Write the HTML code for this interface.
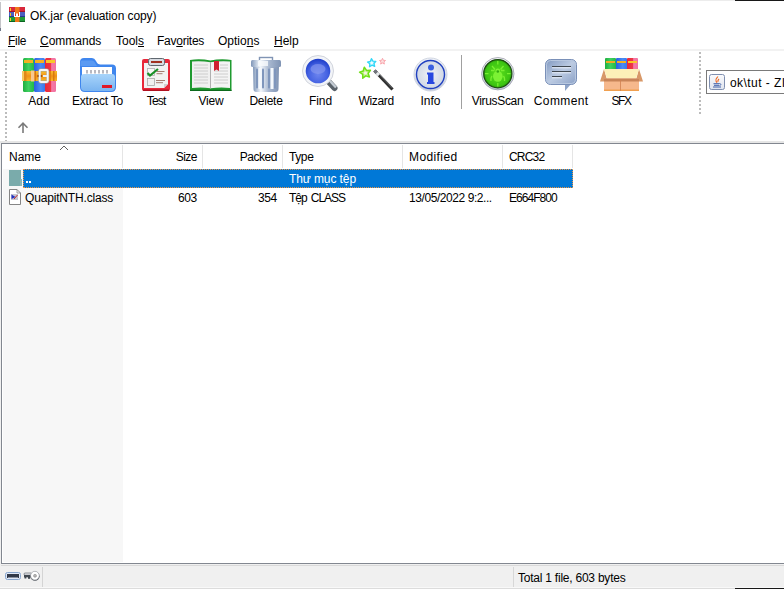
<!DOCTYPE html>
<html>
<head>
<meta charset="utf-8">
<style>
html,body{margin:0;padding:0;}
body{width:784px;height:589px;position:relative;overflow:hidden;background:#fff;font-family:"Liberation Sans",sans-serif;font-size:12px;color:#000;}
.abs{position:absolute;}
.t{position:absolute;white-space:nowrap;line-height:14px;}
u{text-decoration:underline;text-underline-offset:1px;}
.tb{position:absolute;top:100px;transform:translateX(-50%);white-space:nowrap;line-height:14px;top:94px;}
.ic{position:absolute;top:56px;}
</style>
</head>
<body>
<!-- left window edge -->
<div class="abs" style="left:0;top:2px;width:1px;height:26px;background:#c4c4c8;"></div>
<div class="abs" style="left:0;top:28px;width:1px;height:3px;background:#707888;"></div>
<div class="abs" style="left:0;top:0;width:784px;height:1px;background:#ececec;"></div>
<div class="abs" style="left:735px;top:0;width:49px;height:1px;background:#181818;"></div>

<!-- title -->
<svg class="abs" style="left:9px;top:7px" width="16" height="15" viewBox="0 0 16 15">
<rect x="0" y="0" width="16" height="5" fill="#d8283c"/><rect x="0" y="4" width="16" height="1" fill="#a01428"/>
<rect x="0" y="5" width="16" height="5" fill="#4a60c0"/><rect x="0" y="9" width="16" height="1" fill="#283890"/>
<rect x="0" y="10" width="16" height="5" fill="#1f9a38"/><rect x="0" y="14" width="16" height="1" fill="#0c6420"/>
<rect x="1" y="1" width="1" height="3" fill="#f6d020"/><rect x="1" y="6" width="1" height="3" fill="#f6c020"/><rect x="1" y="11" width="1" height="3" fill="#f6d020"/>
<rect x="6" y="0" width="4.500" height="15" fill="#f07818"/>
<rect x="5" y="5" width="6" height="5" fill="#fff"/>
<rect x="6" y="6" width="1" height="3" fill="#e03818"/><rect x="9" y="6" width="1" height="3" fill="#e03818"/><rect x="6" y="5" width="4" height="1.500" fill="#f07818"/>
</svg>
<div class="t" style="left:30px;top:9px;letter-spacing:-0.1px;">OK.jar (evaluation copy)</div>

<!-- menu -->
<div class="t" style="left:8px;top:34px;letter-spacing:-0.3px;"><u>F</u>ile</div>
<div class="t" style="left:40px;top:34px;"><u>C</u>ommands</div>
<div class="t" style="left:116px;top:34px;">Tool<u>s</u></div>
<div class="t" style="left:157px;top:34px;letter-spacing:-0.25px;">Fav<u>o</u>rites</div>
<div class="t" style="left:218px;top:34px;">Optio<u>n</u>s</div>
<div class="t" style="left:274px;top:34px;"><u>H</u>elp</div>

<!-- toolbar -->
<div class="abs" style="left:0;top:49px;width:784px;height:2px;background:#f2f2f2;"></div>
<div class="abs" style="left:5px;top:52px;width:2px;height:90px;background:repeating-linear-gradient(to bottom,#bcbcbc 0,#bcbcbc 2px,transparent 2px,transparent 4px);"></div>
<div class="abs" style="left:0;top:141px;width:784px;height:2px;background:#e6e6e6;"></div>

<div class="tb" style="left:39px;">Add</div>
<div class="tb" style="left:97.500px;letter-spacing:-0.2px;">Extract To</div>
<div class="tb" style="left:156.200px;letter-spacing:-0.75px;">Test</div>
<div class="tb" style="left:211px;letter-spacing:-0.2px;">View</div>
<div class="tb" style="left:266px;letter-spacing:-0.25px;">Delete</div>
<div class="tb" style="left:320.500px;letter-spacing:-0.1px;">Find</div>
<div class="tb" style="left:376.200px;letter-spacing:-0.33px;">Wizard</div>
<div class="tb" style="left:430.500px;">Info</div>
<div class="tb" style="left:497.500px;letter-spacing:-0.33px;">VirusScan</div>
<div class="tb" style="left:561.200px;letter-spacing:0.4px;">Comment</div>
<div class="tb" style="left:621px;letter-spacing:-1.4px;">SFX</div>
<div class="abs" style="left:461px;top:55px;width:1px;height:54px;background:#a0a0a0;"></div>
<div class="abs" style="left:699px;top:52px;width:2px;height:62px;background:repeating-linear-gradient(to bottom,#bcbcbc 0,#bcbcbc 2px,transparent 2px,transparent 4px);"></div>

<!-- ICONS -->
<svg class="abs" style="left:0;top:0" width="784" height="140" viewBox="0 0 784 140">
<defs>
<linearGradient id="gG" x1="0" x2="1"><stop offset="0" stop-color="#1fae3f"/><stop offset="0.5" stop-color="#3fd060"/><stop offset="1" stop-color="#26b848"/></linearGradient>
<linearGradient id="gB" x1="0" x2="1"><stop offset="0" stop-color="#2a5fe0"/><stop offset="0.6" stop-color="#4a8cf5"/><stop offset="1" stop-color="#3a78ec"/></linearGradient>
<linearGradient id="gR" x1="0" x2="1"><stop offset="0" stop-color="#e82838"/><stop offset="0.55" stop-color="#ee3848"/><stop offset="0.6" stop-color="#f57aa8"/><stop offset="1" stop-color="#f070a0"/></linearGradient>
<linearGradient id="gBelt" x1="0" x2="0" y1="0" y2="1"><stop offset="0" stop-color="#f8c030"/><stop offset="0.5" stop-color="#f09018"/><stop offset="1" stop-color="#f8b828"/></linearGradient>
<linearGradient id="gFold" x1="0" x2="0" y1="0" y2="1"><stop offset="0" stop-color="#a8d4fa"/><stop offset="1" stop-color="#7ab4f0"/></linearGradient>
<linearGradient id="gTrash" x1="0" x2="1"><stop offset="0" stop-color="#7f96b8"/><stop offset="0.3" stop-color="#f4f8fc"/><stop offset="0.6" stop-color="#a8b8d0"/><stop offset="1" stop-color="#8094b4"/></linearGradient>
<radialGradient id="gLens" cx="0.5" cy="0.62" r="0.62"><stop offset="0" stop-color="#6c84ee"/><stop offset="0.55" stop-color="#4462e2"/><stop offset="1" stop-color="#1030c0"/></radialGradient>
<radialGradient id="gInfo" cx="0.5" cy="0.5" r="0.5"><stop offset="0" stop-color="#f0f2f6"/><stop offset="1" stop-color="#d0d8e6"/></radialGradient>
<radialGradient id="gVir" cx="0.5" cy="0.5" r="0.5"><stop offset="0" stop-color="#5ce01c"/><stop offset="0.85" stop-color="#3cc412"/><stop offset="1" stop-color="#2a9a0c"/></radialGradient><linearGradient id="gRing" x1="0" x2="0" y1="0" y2="1"><stop offset="0" stop-color="#f2f4f8"/><stop offset="1" stop-color="#c2cadc"/></linearGradient>
<linearGradient id="gCom" x1="0" x2="1" y1="0" y2="1"><stop offset="0" stop-color="#8098c0"/><stop offset="0.5" stop-color="#bccbe2"/><stop offset="1" stop-color="#8aa0c6"/></linearGradient>
</defs>

<!-- Add -->
<rect x="23" y="58" width="11" height="34" rx="1.500" fill="url(#gG)"/>
<rect x="34" y="58" width="11" height="34" rx="1.500" fill="url(#gB)"/>
<rect x="45" y="58" width="11" height="34" rx="1.500" fill="url(#gR)"/>
<rect x="24" y="60" width="9" height="3" fill="#f5b020"/><rect x="35" y="60" width="9" height="3" fill="#f5b020"/><rect x="46" y="60" width="9" height="3" fill="#f8c828"/>
<rect x="22" y="71" width="35" height="10" fill="url(#gBelt)"/>
<rect x="22" y="71" width="2" height="10" fill="#f8c860"/><rect x="24" y="71" width="2.500" height="10" fill="#e08818"/><rect x="31" y="70.500" width="3.500" height="11" fill="#f8c890"/><rect x="34.500" y="71" width="1.500" height="10" fill="#d87810"/><rect x="49" y="71" width="2" height="10" fill="#e08010"/><rect x="53" y="71" width="1.500" height="10" fill="#d87810"/>
<rect x="39.700" y="70" width="8" height="12" rx="1.200" fill="none" stroke="#a8a098" stroke-width="2.800"/><rect x="39.700" y="70" width="8" height="12" rx="1.200" fill="none" stroke="#f4f6f8" stroke-width="1.900"/>
<rect x="43" y="75" width="4" height="2" fill="#e8eef4"/>
<circle cx="38" cy="76" r="0.800" fill="#803000"/><circle cx="41.500" cy="76" r="0.800" fill="#803000"/>

<!-- Extract To -->
<path d="M80 62 q0 -4 4 -4 h8 q2.500 0 4 3 q1.500 3.500 4.500 3.500 h11.500 q4 0 4 4 v18.500 q0 5 -5 5 h-26 q-5 0 -5 -5 z" fill="#3f86ee"/><path d="M82 60.500 h10 q2 0 3.500 3 l1.500 2.500 h-16.500 v-4 q0 -1.500 1.500 -1.500z" fill="#5a9af2"/>
<rect x="82" y="67" width="30" height="9" fill="#ffffff"/>
<g fill="#b8b8c0"><rect x="86" y="70" width="2" height="3.500"/><rect x="90" y="70" width="2" height="3.500"/><rect x="94" y="70" width="2" height="3.500"/><rect x="98" y="70" width="2" height="3.500"/><rect x="102" y="70" width="2" height="3.500"/><rect x="106" y="70" width="2" height="3.500"/></g>
<path d="M81 77 q0 -3 3 -3 h28 q3 0 3 3 v10 q0 4 -4 4 h-26 q-4 0 -4 -4 z" fill="url(#gFold)"/>
<rect x="102" y="85" width="10" height="3" fill="#e01828"/>

<!-- Test -->
<rect x="142" y="59" width="28" height="32" rx="2" fill="#e8283a"/>
<rect x="143" y="89.500" width="26" height="1.500" fill="#b01020"/>
<path d="M144 63 h24 v21 l-4 4 h-20 z" fill="#f2f2f2"/>
<path d="M168 84 l-4 4 v-4 z" fill="#d0d0d0"/>
<rect x="148.500" y="58.500" width="16" height="7" rx="2" fill="#d8dce2" stroke="#606870" stroke-width="1"/>
<rect x="151" y="61" width="11" height="2" fill="#a03020"/>
<rect x="147.500" y="68.500" width="7" height="7" fill="#f8f8f8" stroke="#b0b0b0" stroke-width="0.800"/>
<rect x="147.500" y="78.500" width="7" height="7" fill="#f0f0f0" stroke="#a8a8a8" stroke-width="0.800"/>
<path d="M147.500 73 l2.500 2.500 l8 -6.500" fill="none" stroke="#189028" stroke-width="2.200"/>
<g stroke="#906050" stroke-width="0.800"><path d="M156.500 71.500h8M156.500 73.700h6M156 80.500h9M156 82.700h7"/></g>

<!-- View -->
<path d="M190 60 q10 -1.500 20.500 0.500 q10 -2 21 -0.500 v31 h-41.500 z" fill="#1f9a30"/>
<rect x="190" y="89.800" width="41.500" height="1.200" fill="#0c6a1c"/>
<path d="M192 61.500 q9 -1 18.500 0.800 v26 q-9 -1.500 -18.500 -0.300 z" fill="#f0f0f0"/>
<path d="M230 61.500 q-9 -1 -19.500 0.800 v26 q10 -1.500 19.500 -0.300 z" fill="#f4f4f4"/>
<path d="M210.500 62 v26.500" stroke="#b0b0b0" stroke-width="1"/>
<g stroke="#c4c4c4" stroke-width="0.800"><path d="M194 65h14M194 68h14M194 71h14M194 74h14M194 77h14M194 80h14M194 83h14M220 65h8M220 68h8M214 71h14M214 74h14M214 77h14M214 80h14M214 83h14"/></g>
<path d="M214 61 h5 v10 l-2.500 -1.500 l-2.500 1.500 z" fill="#d02030"/>

<!-- Delete -->
<rect x="259.500" y="57.500" width="13" height="4" fill="none" stroke="#8094b4" stroke-width="1.400"/>
<rect x="251" y="60" width="30" height="7" rx="1.500" fill="url(#gTrash)"/>
<path d="M253 67 h26 l-0.500 22 q0 3 -3 3 h-19 q-3 0 -3 -3 z" fill="url(#gTrash)"/>
<g fill="#7f96bc"><rect x="256" y="68.500" width="2" height="20" rx="1"/><rect x="262" y="68.500" width="2" height="20" rx="1"/><rect x="268" y="68.500" width="2" height="20" rx="1"/><rect x="274" y="68.500" width="2" height="20" rx="1"/></g>
<g fill="#f4f8fc"><rect x="258.500" y="68" width="3" height="21"/><rect x="270.500" y="68" width="3" height="21"/></g><rect x="258" y="61" width="10" height="5" fill="#f8fafd" opacity="0.800"/>

<!-- Find -->
<path d="M328 81 l6.500 7" stroke="#5a626a" stroke-width="6" stroke-linecap="round"/>
<path d="M330 81 l6 6.500" stroke="#c4ccd4" stroke-width="2.500"/>
<circle cx="318" cy="71" r="14" fill="url(#gLens)" stroke="#f2f4f8" stroke-width="3.400"/>
<circle cx="318" cy="71" r="15.500" fill="none" stroke="#c8ccd4" stroke-width="0.800"/>
<ellipse cx="318" cy="69" rx="7.500" ry="5" fill="#8c9cf0" opacity="0.600"/>

<!-- Wizard -->
<path d="M374.500 70.500 l18 19" stroke="#303030" stroke-width="3.200"/>
<path d="M374.500 70.500 l2.200 2.300" stroke="#70747a" stroke-width="3.200"/>
<path d="M376.700 72.800 l2.300 2.400" stroke="#e8eaee" stroke-width="3.200"/>
<path d="M380 75 l12 12.700" stroke="#787c80" stroke-width="0.800"/>
<path d="M364.29 67.29 L366.57 70.39 L370.42 70.28 L368.17 73.40 L369.47 77.03 L365.80 75.86 L362.76 78.21 L362.74 74.36 L359.56 72.19 L363.21 70.99z" fill="#c8f090" stroke="#70e018" stroke-width="1.500" stroke-linejoin="round"/>
<circle cx="365.500" cy="73" r="1.600" fill="#f4f4e0"/>
<path d="M371.42 58.62 L372.93 61.11 L375.85 61.28 L373.94 63.49 L374.69 66.32 L371.99 65.19 L369.53 66.77 L369.77 63.86 L367.51 62.01 L370.36 61.34z" fill="#b8f0fc" stroke="#30d8f8" stroke-width="1.300" stroke-linejoin="round"/>
<circle cx="371.800" cy="63" r="1.300" fill="#eefafe"/>
<path d="M382.50 58.30 L383.38 60.29 L385.54 60.51 L383.93 61.96 L384.38 64.09 L382.50 63.00 L380.62 64.09 L381.07 61.96 L379.46 60.51 L381.62 60.29z" fill="#fcdcdc" stroke="#f8a0a8" stroke-width="0.900" stroke-linejoin="round"/>

<!-- Info -->
<circle cx="430.500" cy="74.500" r="16.500" fill="url(#gRing)" stroke="#d0d6e2" stroke-width="1"/>
<circle cx="430.500" cy="74.500" r="14" fill="url(#gInfo)" stroke="#2040c0" stroke-width="1.400"/>
<circle cx="431" cy="67.500" r="3" fill="#3a60e0"/>
<path d="M427 72.500 h6.500 v9.500 h1 v2 h-7.500 v-2 h1 v-7.500 h-1z" fill="#2848e0"/>

<!-- VirusScan -->
<circle cx="497.800" cy="73.700" r="16.200" fill="url(#gRing)" stroke="#9c9ca8" stroke-width="0.800"/>
<circle cx="497.800" cy="73.700" r="14.100" fill="url(#gVir)" stroke="#1c4a10" stroke-width="1.200"/>
<g stroke="#78f030" stroke-width="1.300" fill="none"><path d="M497.800 61v3.500M497.800 83v3.500M485 73.700h3.500M507 73.700h3.500M492 66l3 3.500M503.500 66l-3 3.500M491 70.500h3.500M504.500 70.500h-3.500M492 76 q-1.500 2 -1 5M503.500 76 q1.500 2 1 5"/></g>
<ellipse cx="497.800" cy="76.300" rx="4.800" ry="5.500" fill="#7cf234"/><circle cx="497.800" cy="70.800" r="2.400" fill="#7cf234"/>
<circle cx="497.800" cy="71.500" r="1.300" fill="#34ac10"/>

<!-- Comment -->
<path d="M565 84 v7 l6 -7z" fill="#8ea4c8"/>
<rect x="545.500" y="59.500" width="31" height="25" rx="5" fill="url(#gCom)" stroke="#7a90b8" stroke-width="1"/>
<rect x="546.500" y="60.500" width="29" height="23" rx="4" fill="none" stroke="#b8c8e0" stroke-width="1"/>
<g stroke="#404850" stroke-width="1.200"><path d="M552 66.500h19M552 71.500h19M552 76.500h10"/></g>
<g stroke="#e8eef8" stroke-width="1"><path d="M552 67.800h19M552 72.800h19M552 77.800h10"/></g>

<!-- SFX -->
<rect x="605" y="58" width="11" height="12" rx="1" fill="url(#gG)"/>
<rect x="616" y="58" width="11" height="12" rx="1" fill="url(#gB)"/>
<rect x="627" y="58" width="11" height="12" rx="1" fill="url(#gR)"/>
<rect x="606" y="61" width="9" height="2" fill="#f5a820"/><rect x="617" y="61" width="9" height="2" fill="#f5b020"/><rect x="628" y="61" width="9" height="2" fill="#f8c828"/>
<path d="M604 69 l-4 12.500 h7.500z M639 69 l4 12.500 h-7.500z" fill="#d89868"/>
<path d="M604 69 h35 l-3 9.500 h-29z" fill="#fdf0b8"/>
<rect x="604" y="78.500" width="35" height="12.500" fill="#f6b88c"/>
<rect x="604" y="78.500" width="35" height="3" fill="#c88458"/>
<rect x="604" y="89.500" width="35" height="1.500" fill="#f0a050"/>
<path d="M620.500 80 v11" stroke="#d08050" stroke-width="0.800"/>
</svg>
<!-- /ICONS -->
<!-- path box -->
<div class="abs" style="left:706px;top:70px;width:90px;height:24px;border:1px solid #7a7a7a;background:#fff;box-sizing:border-box;"></div>
<svg class="abs" style="left:709px;top:74px" width="16" height="16" viewBox="0 0 16 16">
<defs><linearGradient id="gJ" x1="0" x2="0" y1="0" y2="1"><stop offset="0" stop-color="#fafbfd"/><stop offset="1" stop-color="#dfe4ee"/></linearGradient></defs>
<rect x="0.500" y="0.500" width="15" height="15" rx="2" fill="url(#gJ)" stroke="#7f8fb0" stroke-width="1"/>
<path d="M9 2.500c-1 1.500-3 2.500-2 4.500c0.300 0.700 0.800 1 0.700 1.800M10 5c-1 1-1.500 1.800-1 3" fill="none" stroke="#f06820" stroke-width="1.100"/>
<path d="M4.500 9.700h6M5 11.300h5M4 13h8" stroke="#4060a8" stroke-width="1"/>
<path d="M10.500 9.500c1.800 0 1.800 2 0 2" fill="none" stroke="#4060a8" stroke-width="0.900"/>
</svg>
<div class="t" style="left:730px;top:76px;letter-spacing:0.43px;">ok\tut - ZIP</div>

<!-- up arrow -->
<svg class="abs" style="left:17px;top:122px" width="12" height="12" viewBox="0 0 12 12"><path d="M6 11V1.500M1.500 5.700L6 1.200l4.500 4.500" fill="none" stroke="#7a7a7a" stroke-width="1.600"/></svg>

<!-- list -->
<div class="abs" style="left:0;top:143px;width:784px;height:1px;background:#828790;"></div>
<div class="abs" style="left:1px;top:144px;width:1px;height:420px;background:#828790;"></div>
<div class="abs" style="left:0;top:143px;width:1px;height:446px;background:#f0f0f0;"></div>
<div class="abs" style="left:3px;top:169px;width:120px;height:393px;background:#f7f7f7;"></div>
<div class="abs" style="left:1px;top:563px;width:783px;height:1px;background:#828790;"></div>

<!-- header -->
<div class="abs" style="left:122px;top:145px;width:1px;height:23px;background:#e5e5e5;"></div>
<div class="abs" style="left:202px;top:145px;width:1px;height:23px;background:#e5e5e5;"></div>
<div class="abs" style="left:282px;top:145px;width:1px;height:23px;background:#e5e5e5;"></div>
<div class="abs" style="left:402px;top:145px;width:1px;height:23px;background:#e5e5e5;"></div>
<div class="abs" style="left:502px;top:145px;width:1px;height:23px;background:#e5e5e5;"></div>
<div class="abs" style="left:572px;top:145px;width:1px;height:23px;background:#e5e5e5;"></div>
<svg class="abs" style="left:59px;top:144.500px" width="10" height="6" viewBox="0 0 10 6"><path d="M1 5L5 1l4 4" fill="none" stroke="#606060" stroke-width="1"/></svg>
<div class="t" style="left:9px;top:150px;">Name</div>
<div class="t" style="right:587px;top:150px;letter-spacing:-0.5px;">Size</div>
<div class="t" style="right:507px;top:150px;letter-spacing:-0.45px;">Packed</div>
<div class="t" style="left:289px;top:150px;letter-spacing:-0.4px;">Type</div>
<div class="t" style="left:409px;top:150px;letter-spacing:0.4px;">Modified</div>
<div class="t" style="left:509px;top:150px;letter-spacing:-0.8px;">CRC32</div>

<!-- selected row -->
<div class="abs" style="left:23px;top:169px;width:550px;height:19px;background:#0078d7;box-sizing:border-box;border:1px dotted #f09440;"></div>
<div class="abs" style="left:9px;top:170px;width:12px;height:16px;background:#7aabab;"></div>
<div class="abs" style="left:20px;top:179px;width:2px;height:7px;background:#8ab6b6;"></div>
<svg class="abs" style="left:9px;top:189px" width="13" height="16" viewBox="0 0 13 16"><path d="M0.500 0.500h7.500l3.500 3.500v11.500h-11z" fill="#fff" stroke="#858585" stroke-width="1"/><path d="M8 0.500v3.500h3.500" fill="none" stroke="#858585" stroke-width="0.800"/><rect x="2" y="5" width="7" height="6" fill="#c8c8d0"/><path d="M2.500 5.500l4 2.500-4 2z" fill="#2030c0"/><path d="M5 10l3.500-4" stroke="#c03030" stroke-width="1"/></svg>
<div class="abs" style="left:26px;top:181px;width:2px;height:2px;background:#fff;"></div><div class="abs" style="left:29px;top:181px;width:2px;height:2px;background:#fff;"></div>
<div class="t" style="left:289px;top:172px;color:#fff;letter-spacing:-0.1px;">Thư mục tệp</div>

<!-- row 2 -->
<div class="t" style="left:25px;top:191px;letter-spacing:-0.17px;">QuapitNTH.class</div>
<div class="t" style="right:587px;top:191px;letter-spacing:-0.3px;">603</div>
<div class="t" style="right:507px;top:191px;letter-spacing:-0.3px;">354</div>
<div class="t" style="left:289px;top:191px;letter-spacing:-1.05px;word-spacing:2px;">Tệp CLASS</div>
<div class="t" style="left:409px;top:191px;letter-spacing:-0.43px;">13/05/2022 9:2...</div>
<div class="t" style="left:509px;top:191px;letter-spacing:-0.95px;">E664F800</div>

<!-- status bar -->
<div class="abs" style="left:0;top:564px;width:784px;height:25px;background:#f0f0f0;"></div>
<div class="abs" style="left:1px;top:565px;width:783px;height:1px;background:#d9d9d9;"></div>
<div class="abs" style="left:42px;top:567px;width:1px;height:20px;background:#d4d4d4;"></div>
<div class="abs" style="left:513px;top:567px;width:1px;height:20px;background:#d7d7d7;"></div>
<svg class="abs" style="left:0;top:564px" width="60" height="25" viewBox="0 564 60 25">
<rect x="5.500" y="572.500" width="15" height="7" rx="2" fill="#dfe8f6" stroke="#86a4cc" stroke-width="1"/>
<rect x="7" y="574" width="12" height="4" fill="#303848"/>
<rect x="8" y="577" width="10" height="1" fill="#8890a0"/>
<rect x="24" y="573" width="8" height="2.200" rx="1" fill="#e4e6ea" stroke="#505860" stroke-width="0.600"/>
<rect x="24" y="575" width="8" height="2.300" fill="#404850"/>
<rect x="24.500" y="577" width="1.800" height="1.500" fill="#404850"/><rect x="28" y="577" width="2.200" height="1.800" fill="#404850"/>
<circle cx="35" cy="576.200" r="4.600" fill="#50565e"/>
<circle cx="34.900" cy="575.600" r="4.300" fill="#ffffff" stroke="#8a8e94" stroke-width="0.500"/>
<circle cx="35" cy="575.800" r="1.500" fill="#b4b4b4" stroke="#808080" stroke-width="0.500"/>
</svg>
<div class="abs" style="left:0;top:587px;width:784px;height:1px;background:#f8f8f8;"></div>
<div class="abs" style="left:0;top:588px;width:784px;height:1px;background:#dcdcdc;"></div>
<div class="abs" style="left:735px;top:588px;width:49px;height:1px;background:#181818;"></div>
<div class="t" style="left:518px;top:571px;letter-spacing:-0.23px;">Total 1 file, 603 bytes</div>
</body>
</html>
